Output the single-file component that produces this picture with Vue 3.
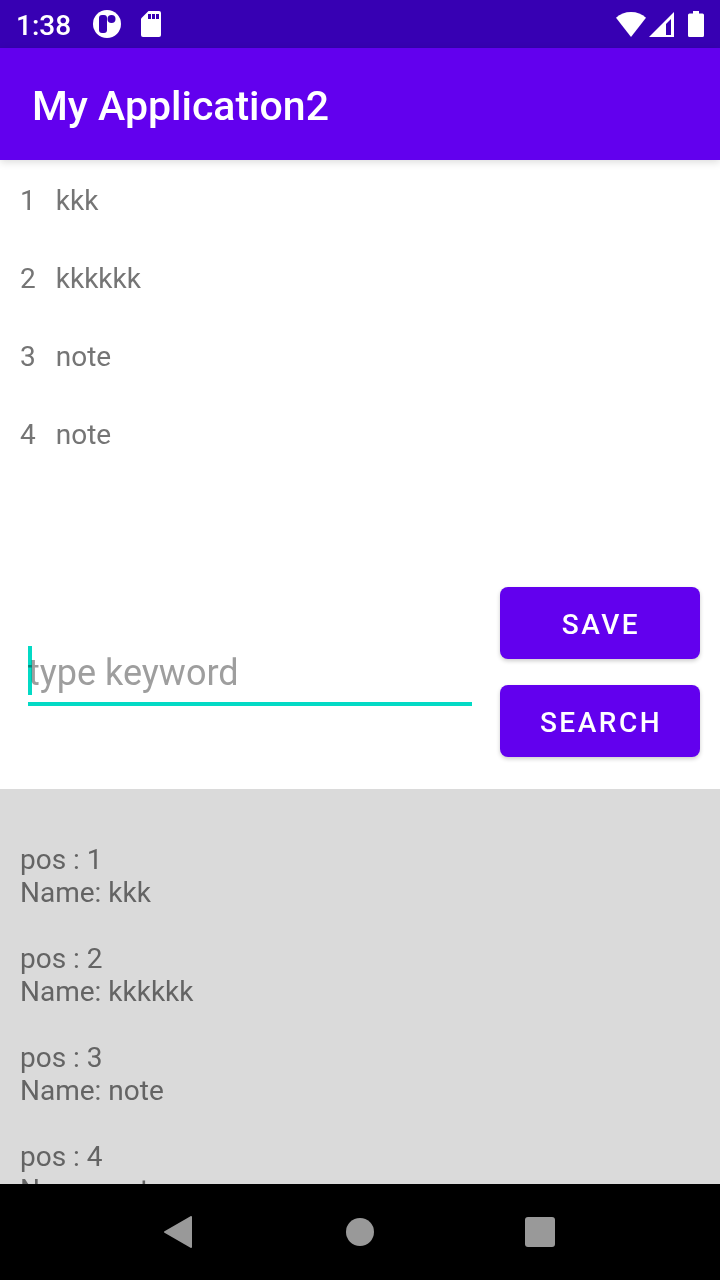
<script setup>
import { ref } from 'vue'

const keyword = ref('')
const focused = ref(true)
const notes = ref([
  { pos: 1, name: 'kkk' },
  { pos: 2, name: 'kkkkkk' },
  { pos: 3, name: 'note' },
  { pos: 4, name: 'note' },
])

function save() {
  const name = keyword.value.trim()
  if (!name) return
  notes.value.push({ pos: notes.value.length + 1, name })
  keyword.value = ''
}
</script>

<template>
  <div class="screen">
    <div class="status-bar">
      <span class="clock">1:38</span>
      <svg class="app-badge" width="28" height="28" viewBox="0 0 28 28" aria-hidden="true">
        <circle cx="14" cy="14" r="14" fill="#fff" />
        <rect x="6" y="5" width="8" height="18" rx="3" fill="#3700b3" />
        <circle cx="18.500" cy="9" r="4" fill="#3700b3" />
      </svg>
      <svg class="sd-card" width="20" height="26" viewBox="0 0 20 26" aria-hidden="true">
        <path d="M7.500 0H18a2 2 0 0 1 2 2v22a2 2 0 0 1-2 2H2a2 2 0 0 1-2-2V7.500z" fill="#fff" />
        <path d="M7 3h3v5H7zM11 3h3v5h-3zM15 3h3v5h-3z" fill="#3700b3" />
      </svg>
      <span class="spacer"></span>
      <svg class="wifi" width="30" height="25" viewBox="0 0 30 25" aria-hidden="true">
        <path d="M15 25 0 5.700C4 2 9.200 0 15 0s11 2 15 5.700z" fill="#fff" />
      </svg>
      <svg class="signal" width="25" height="25" viewBox="0 0 25 25" aria-hidden="true">
        <path d="M25 0v25H0z" fill="#fff" />
        <path d="M22 7v16h-5V12z" fill="#3700b3" />
      </svg>
      <svg class="battery" width="16" height="26" viewBox="0 0 16 26" aria-hidden="true">
        <path d="M5 0h6v2.500h3.500A1.500 1.500 0 0 1 16 4v20.500a1.500 1.500 0 0 1-1.500 1.500h-13A1.500 1.500 0 0 1 0 24.500V4a1.500 1.500 0 0 1 1.500-1.500H5z" fill="#fff" />
      </svg>
    </div>

    <header class="app-bar">
      <h1>My Application2</h1>
    </header>

    <ul class="notes">
      <li v-for="note in notes" :key="note.pos">
        <span>{{ note.pos }}</span>
        <span>{{ note.name }}</span>
      </li>
    </ul>

    <form class="entry" @submit.prevent="save">
      <div class="field">
        <input
          v-model="keyword"
          type="text"
          placeholder="type keyword"
          aria-label="type keyword"
          @focus="focused = true"
          @blur="focused = false"
        />
        <span v-if="focused && !keyword" class="caret"></span>
      </div>
      <div class="actions">
        <button type="submit">SAVE</button>
        <button type="button">SEARCH</button>
      </div>
    </form>

    <section class="log">
      <p v-for="note in notes" :key="note.pos">
        pos : {{ note.pos }}<br />Name: {{ note.name }}
      </p>
    </section>

    <nav class="nav-bar">
      <button type="button" aria-label="Back">
        <svg width="32" height="32" viewBox="0 0 32 32" aria-hidden="true">
          <path d="M27 1v30L1 16z" fill="#999" stroke="#999" stroke-width="2" stroke-linejoin="round" />
        </svg>
      </button>
      <button type="button" aria-label="Home">
        <svg width="32" height="32" viewBox="0 0 32 32" aria-hidden="true">
          <circle cx="16" cy="16" r="14" fill="#999" />
        </svg>
      </button>
      <button type="button" aria-label="Recent apps">
        <svg width="32" height="32" viewBox="0 0 32 32" aria-hidden="true">
          <rect x="1" y="1" width="30" height="30" rx="3" fill="#999" />
        </svg>
      </button>
    </nav>
  </div>
</template>

<style>
body {
  margin: 0;
}
</style>

<style scoped>
.screen {
  display: flex;
  flex-direction: column;
  height: 100vh;
  overflow: hidden;
  background: #fff;
  color: #757575;
  font-family: Roboto, "Liberation Sans", sans-serif;
  font-size: 28px;
  line-height: 33px;
}

.status-bar {
  display: flex;
  flex: none;
  align-items: center;
  box-sizing: border-box;
  height: 48px;
  padding: 0 16px;
  background: #3700b3;
  color: #fff;
}

.clock {
  margin-right: 22px;
  padding-top: 2px;
  font-weight: 500;
}

.app-badge {
  margin-right: 20px;
}

.spacer {
  flex: 1;
}

.wifi {
  margin-right: 3px;
}

.signal {
  margin-right: 14px;
}

.app-bar {
  position: relative;
  display: flex;
  flex: none;
  align-items: center;
  box-sizing: border-box;
  height: 112px;
  padding: 4px 32px 0;
  background: #6200ee;
  color: #fff;
  box-shadow: 0 2px 8px rgba(0, 0, 0, 0.15);
}

h1 {
  margin: 0;
  font-size: 41px;
  font-weight: 500;
  line-height: 48px;
}

.notes {
  flex: 0 1 427px;
  min-height: 0;
  margin: 0;
  padding: 0;
  overflow: hidden;
  list-style: none;
}

.notes li {
  display: flex;
  gap: 20px;
  padding: 22px 20px 18px;
  line-height: 38px;
}

.entry {
  display: flex;
  flex: none;
  gap: 28px;
  padding: 0 20px 32px 28px;
}

.field {
  position: relative;
  flex: 1;
  align-self: center;
  height: 60px;
  margin-top: 8px;
}

input {
  display: block;
  box-sizing: border-box;
  width: 100%;
  height: 60px;
  padding: 0 0 2px;
  border: 0;
  border-bottom: 4px solid #03dac5;
  outline: 0;
  background: transparent;
  color: #212121;
  caret-color: #03dac5;
  font: inherit;
  font-size: 36px;
}

input::placeholder {
  color: #9e9e9e;
  opacity: 1;
}

.caret {
  position: absolute;
  top: 0;
  left: 0;
  width: 4px;
  height: 49px;
  background: #03dac5;
  mix-blend-mode: multiply;
  pointer-events: none;
}

.actions {
  display: flex;
  flex-direction: column;
  gap: 26px;
  width: 200px;
}

.actions button {
  height: 72px;
  padding: 2px 0 0 2px;
  border: 0;
  border-radius: 8px;
  background: #6200ee;
  box-shadow: 0 2px 4px rgba(0, 0, 0, 0.2);
  color: #fff;
  font: inherit;
  font-weight: 500;
  letter-spacing: 0.09em;
}

.log {
  flex: 1 1 0;
  min-height: 0;
  box-sizing: border-box;
  padding: 54px 20px 0;
  overflow: hidden;
  background: #dadada;
  color: #646464;
}

.log p {
  margin: 0 0 33px;
}

.nav-bar {
  display: flex;
  flex: none;
  align-items: center;
  justify-content: center;
  gap: 148px;
  height: 96px;
  background: #000;
}

.nav-bar button {
  display: flex;
  padding: 0;
  border: 0;
  background: none;
}
</style>
